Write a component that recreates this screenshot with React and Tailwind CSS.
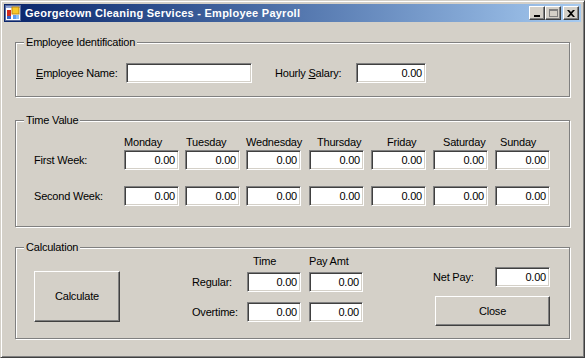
const field =
  'h-[20px] bg-white border border-t-[#808080] border-l-[#808080] border-b-white border-r-white shadow-[inset_1px_1px_0_#404040,inset_-1px_-1px_0_#d4d0c8] flex items-center justify-end pr-[3px] text-[11px] leading-none';

const raised =
  'bg-[#d4d0c8] border border-t-white border-l-white border-b-[#404040] border-r-[#404040] shadow-[inset_-1px_-1px_0_#808080] flex items-center justify-center';

const days = [
  { name: 'Monday', ml: 'ml-0', pad: 'pl-0' },
  { name: 'Tuesday', ml: 'ml-[6px]', pad: 'pl-[1px]' },
  { name: 'Wednesday', ml: 'ml-[6px]', pad: 'pl-0' },
  { name: 'Thursday', ml: 'ml-[8px]', pad: 'pl-[8px]' },
  { name: 'Friday', ml: 'ml-[7px]', pad: 'pl-[16px]' },
  { name: 'Saturday', ml: 'ml-[7px]', pad: 'pl-[10px]' },
  { name: 'Sunday', ml: 'ml-[7px]', pad: 'pl-[5px]' },
];

function Group({ title, className, children }) {
  return (
    <div className={`relative border border-[#808080] shadow-[inset_1px_1px_0_#fff,1px_1px_0_#fff] ${className}`}>
      <span className="absolute left-[8px] top-[-7px] bg-[#d4d0c8] px-[2px] text-[11px] leading-[13px] whitespace-nowrap">
        {title}
      </span>
      {children}
    </div>
  );
}

function AppIcon() {
  return (
    <svg width="16" height="16" viewBox="0 0 16 16">
      <rect x="0.5" y="0.5" width="15" height="15" fill="#ffffff" stroke="#5a6c9c" />
      <rect x="1" y="1" width="14" height="2" fill="#8fa4d8" />
      <rect x="2" y="5" width="4" height="6" fill="#d22a1c" />
      <rect x="2" y="11" width="4" height="3" fill="#3a62c8" />
      <rect x="7" y="2" width="7" height="7" fill="#f8c828" stroke="#c08810" strokeWidth="1" />
      <rect x="8" y="10" width="3" height="4" fill="#5e9cf0" />
      <rect x="11" y="10" width="3" height="4" fill="#8cc0f8" />
    </svg>
  );
}

function CaptionButton({ children, className }) {
  return <div className={`${raised} w-[16px] h-[14px] ${className}`}>{children}</div>;
}

export default function App() {
  return (
    <div
      className="w-[585px] h-[358px] bg-[#d4d0c8] border border-t-[#d4d0c8] border-l-[#d4d0c8] border-b-[#404040] border-r-[#404040] shadow-[inset_1px_1px_0_#fff,inset_-1px_-1px_0_#808080] p-[3px] text-black overflow-hidden"
      style={{ fontFamily: '"Liberation Sans", Arial, sans-serif' }}
    >
      {/* title bar */}
      <div className="h-[18px] bg-gradient-to-r from-[#0a246a] to-[#a6caf0] flex items-center pl-[1px] pr-[2px]">
        <AppIcon />
        <span className="ml-[4px] text-white font-bold text-[11px] tracking-[0.25px] whitespace-nowrap">
          Georgetown Cleaning Services - Employee Payroll
        </span>
        <div className="ml-auto flex items-center">
          <CaptionButton>
            <div className="w-[6px] h-[2px] bg-black mt-[6px] -ml-[1px]" />
          </CaptionButton>
          <CaptionButton>
            <div className="w-[9px] h-[8px] border border-[#808080] border-t-2 -mt-[1px]" />
          </CaptionButton>
          <CaptionButton className="ml-[2px]">
            <svg width="8" height="7" viewBox="0 0 8 7">
              <path d="M0 0h2l2 2 2-2h2L5 3.5 8 7H6L4 5 2 7H0l3-3.5z" fill="#000" />
            </svg>
          </CaptionButton>
        </div>
      </div>

      <div className="ml-[11px] w-[555px] text-[11px] tracking-[-0.2px]">
        {/* Employee Identification */}
        <Group title="Employee Identification" className="mt-[20px] h-[55px]">
          <div className="mt-[20px] pl-[20px] flex items-center h-[20px]">
            <span className="w-[90px]">
              <span className="underline">E</span>mployee Name:
            </span>
            <div className={`${field} w-[126px]`} />
            <span className="ml-[23px] w-[81px]">
              Hourly <span className="underline">S</span>alary:
            </span>
            <div className={`${field} w-[70px]`}>0.00</div>
          </div>
        </Group>

        {/* Time Value */}
        <Group title="Time Value" className="mt-[23px] h-[107px]">
          <div className="mt-[14px] pl-[18px] flex h-[14px] leading-[14px]">
            <span className="w-[90px]" />
            {days.map((d) => (
              <span key={d.name} className={`w-[55px] whitespace-nowrap ${d.ml} ${d.pad}`}>
                {d.name}
              </span>
            ))}
          </div>
          {['First Week:', 'Second Week:'].map((label, i) => (
            <div key={label} className={`pl-[18px] flex items-center h-[20px] ${i === 0 ? 'mt-[1px]' : 'mt-[16px]'}`}>
              <span className="w-[90px]">{label}</span>
              {days.map((d) => (
                <div key={d.name} className={`${field} w-[55px] ${d.ml}`}>0.00</div>
              ))}
            </div>
          ))}
        </Group>

        {/* Calculation */}
        <Group title="Calculation" className="mt-[20px] h-[92px]">
          <div className="flex items-start">
            <button className={`${raised} ml-[18px] mt-[23px] w-[86px] h-[51px] text-[11px] tracking-[-0.2px]`}>Calculate</button>

            <div className="ml-[72px] mt-[7px]">
              <div className="flex h-[13px] leading-[13px]">
                <span className="w-[61px]" />
                <span className="w-[56px]">Time</span>
                <span>Pay Amt</span>
              </div>
              <div className="flex items-center h-[20px] mt-[4px]">
                <span className="w-[55px]">Regular:</span>
                <div className={`${field} w-[54px]`}>0.00</div>
                <div className={`${field} w-[54px] ml-[8px]`}>0.00</div>
              </div>
              <div className="flex items-center h-[20px] mt-[10px]">
                <span className="w-[55px]">Overtime:</span>
                <div className={`${field} w-[54px]`}>0.00</div>
                <div className={`${field} w-[54px] ml-[8px]`}>0.00</div>
              </div>
            </div>

            <div className="ml-[70px] mt-[19px]">
              <div className="flex items-center h-[20px]">
                <span className="w-[62px]">Net Pay:</span>
                <div className={`${field} w-[55px]`}>0.00</div>
              </div>
              <button className={`${raised} ml-[2px] mt-[9px] w-[115px] h-[30px] text-[11px] tracking-[-0.2px]`}>Close</button>
            </div>
          </div>
        </Group>
      </div>
    </div>
  );
}
